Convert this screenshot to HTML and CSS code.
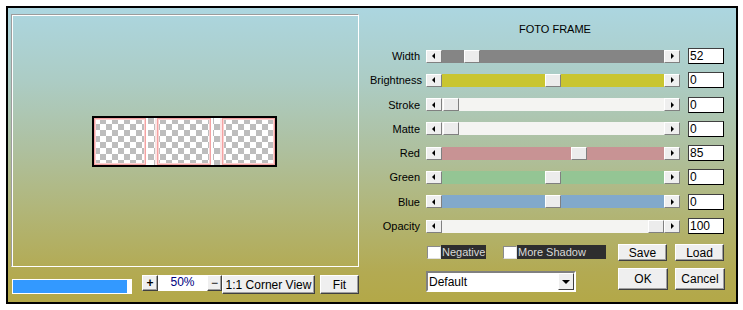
FILE: index.html
```html
<!DOCTYPE html>
<html lang="en">
<head>
    <meta charset="UTF-8">
    <title>Foto Frame</title>
    <link rel="stylesheet" href="styles.css">
</head>
<body>
    <div class="dialog">
        <div class="left-pane">
            <div class="preview">
                <div class="photo">
                    <div class="frame" style="width: 52px"></div>
                    <div class="strip"></div>
                    <div class="frame" style="width: 54px"></div>
                    <div class="strip"></div>
                    <div class="frame" style="width: 53px"></div>
                </div>
            </div>
            <div class="tools">
                <div class="progress"><div class="progress-fill"></div></div>
                <button class="btn zoom-btn">+</button>
                <div class="zoom-value">50%</div>
                <button class="btn zoom-btn minus">&minus;</button>
                <button class="btn corner-btn">1:1 Corner View</button>
                <button class="btn fit-btn">Fit</button>
            </div>
        </div>
        <div class="right-pane">
            <div class="title">FOTO FRAME</div>
            <div class="rows">
                <span class="label">Width</span>
                <div class="slider"><span class="arrow"><i class="tri-left"></i></span><div class="track tr-gray"><span class="thumb" style="margin-left: 22px"></span></div><span class="arrow"><i class="tri-right"></i></span></div>
                <div class="value">52</div>

                <span class="label">Brightness</span>
                <div class="slider"><span class="arrow"><i class="tri-left"></i></span><div class="track tr-yellow"><span class="thumb" style="margin-left: 103px"></span></div><span class="arrow"><i class="tri-right"></i></span></div>
                <div class="value">0</div>

                <span class="label">Stroke</span>
                <div class="slider"><span class="arrow"><i class="tri-left"></i></span><div class="track tr-white"><span class="thumb" style="margin-left: 1px"></span></div><span class="arrow"><i class="tri-right"></i></span></div>
                <div class="value">0</div>

                <span class="label">Matte</span>
                <div class="slider"><span class="arrow"><i class="tri-left"></i></span><div class="track tr-white"><span class="thumb" style="margin-left: 1px"></span></div><span class="arrow"><i class="tri-right"></i></span></div>
                <div class="value">0</div>

                <span class="label">Red</span>
                <div class="slider"><span class="arrow"><i class="tri-left"></i></span><div class="track tr-red"><span class="thumb" style="margin-left: 129px"></span></div><span class="arrow"><i class="tri-right"></i></span></div>
                <div class="value">85</div>

                <span class="label">Green</span>
                <div class="slider"><span class="arrow"><i class="tri-left"></i></span><div class="track tr-green"><span class="thumb" style="margin-left: 103px"></span></div><span class="arrow"><i class="tri-right"></i></span></div>
                <div class="value">0</div>

                <span class="label">Blue</span>
                <div class="slider"><span class="arrow"><i class="tri-left"></i></span><div class="track tr-blue"><span class="thumb" style="margin-left: 103px"></span></div><span class="arrow"><i class="tri-right"></i></span></div>
                <div class="value">0</div>

                <span class="label">Opacity</span>
                <div class="slider"><span class="arrow"><i class="tri-left"></i></span><div class="track tr-white"><span class="thumb" style="margin-left: 206px"></span></div><span class="arrow"><i class="tri-right"></i></span></div>
                <div class="value">100</div>
            </div>
            <div class="options">
                <span class="check"></span><span class="check-label" style="width: 45px">Negative</span>
                <span class="check second"></span><span class="check-label" style="width: 89px">More Shadow</span>
                <button class="btn save-btn">Save</button>
                <button class="btn load-btn">Load</button>
            </div>
            <div class="actions">
                <div class="select">
                    <span class="select-text">Default</span>
                    <span class="select-arrow"><i class="tri-down"></i></span>
                </div>
                <button class="btn ok-btn">OK</button>
                <button class="btn cancel-btn">Cancel</button>
            </div>
        </div>
    </div>
</body>
</html>
```

FILE: styles.css
```css
body { margin: 0; background: #fff; font-family: "Liberation Sans", Arial, sans-serif; font-size: 11px; color: #000; }
.dialog { margin: 6px; width: 732px; height: 298px; box-sizing: border-box; border: 2px solid #000; display: flex;
    background: linear-gradient(#acd6e0 0%, #acccc4 25%, #aec09f 48%, #b1b67a 68%, #b3aa52 90%, #b3a848 100%); }

/* preview side */
.left-pane { width: 348px; padding: 6px 0 0 3px; }
.preview { box-sizing: border-box; width: 348px; height: 253px; border: 1px solid; border-color: #9c9c9c #fff #fff #9c9c9c;
    box-shadow: inset 1px 1px #fff; display: flex; align-items: center; justify-content: center; }
.photo { display: flex; width: 181px; height: 47px; border: 2px solid #000; margin: 1px 1px 0 0;
    background-image: conic-gradient(#bdbdbd 25%, #fff 0 50%, #bdbdbd 0 75%, #fff 0); background-size: 12px 12px; }
.frame { box-sizing: border-box; height: 47px; border: 1px solid #f4a2a2; box-shadow: inset 0 0 0 1px #fbd2d2; }
.strip { box-sizing: border-box; width: 11px; height: 47px; border-left: 2px solid #fff; border-right: 2px solid #fbe6e6; }

.tools { display: flex; align-items: flex-start; margin-top: 8px; }
.progress { box-sizing: border-box; width: 120px; height: 15px; margin: 4px 10px 0 1px; background: #fff; padding: 1px 5px 1px 1px; }
.progress-fill { height: 13px; background: #3399ff; }

.btn { box-sizing: border-box; margin: 0; padding: 0; font-family: "Liberation Sans", Arial, sans-serif; font-size: 11px; color: #000;
    background: #efefef; border: 1px solid; border-color: #fff #404040 #404040 #fff; box-shadow: inset -1px -1px #a0a0a0; }
.zoom-btn { width: 16px; height: 16px; font-weight: bold; font-size: 12px; line-height: 12px; }
.minus { width: 15px; font-weight: normal; }
.zoom-value { width: 49px; height: 16px; background: #fff; color: #000080; font-size: 12px; line-height: 14px; text-align: center; }
.corner-btn { width: 93px; height: 19px; font-size: 12px; }
.fit-btn { width: 39px; height: 19px; margin-left: 5px; font-size: 12px; }

/* controls side */
.right-pane { margin-left: 11px; padding-top: 15px; }
.title { margin-left: 16px; width: 338px; text-align: center; line-height: 13px; margin-bottom: 12px; }
.rows { display: grid; grid-template-columns: 56px 262px 36px; grid-auto-rows: 16px; row-gap: 8.3px; align-items: center; }
.label { text-align: right; padding-right: 6px; white-space: nowrap; }
.slider { display: flex; width: 254px; height: 13px; }
.arrow { box-sizing: border-box; width: 16px; height: 13px; background: #efefef; display: flex; align-items: center; justify-content: center;
    border: 1px solid; border-color: #fff #808080 #808080 #fff; }
.tri-left { width: 0; height: 0; border-right: 3px solid #000; border-top: 3px solid transparent; border-bottom: 3px solid transparent; margin-right: 2px; }
.tri-right { width: 0; height: 0; border-left: 3px solid #000; border-top: 3px solid transparent; border-bottom: 3px solid transparent; margin-left: 1px; }
.track { flex: 1; display: flex; }
.tr-gray { background: #858585; }
.tr-yellow { background: #c9c530; }
.tr-white { background: #f4f4f2; }
.tr-red { background: #c89394; }
.tr-green { background: #94c594; }
.tr-blue { background: #82a9cb; }
.thumb { box-sizing: border-box; width: 16px; height: 13px; background: #ececec; border: 1px solid; border-color: #fff #808080 #808080 #fff; }
.value { box-sizing: border-box; width: 36px; height: 16px; background: #fff; border: 1px solid #000; border-color: #404040 #000 #000 #404040;
    font-size: 12px; line-height: 14px; padding-left: 1px; }

.options { display: flex; align-items: flex-start; margin: 10px 0 0 56px; height: 17px; }
.check { box-sizing: border-box; width: 14px; height: 13px; margin: 2px 0 0 1px; background: #fff; border: 1px solid; border-color: #8a8a8a #e0e0e0 #e0e0e0 #8a8a8a; }
.check.second { margin-left: 17px; }
.check-label { height: 14px; margin-top: 1px; background: #2e2e2e; color: #d9d9d9; line-height: 14px; padding-left: 1px; box-sizing: border-box; white-space: nowrap; }
.save-btn { width: 49px; height: 17px; margin-left: 12px; font-size: 12px; }
.load-btn { width: 49px; height: 17px; margin-left: 8px; font-size: 12px; }

.actions { display: flex; align-items: flex-start; margin: 7px 0 0 56px; }
.select { box-sizing: border-box; width: 150px; height: 21px; margin-top: 3px; background: #fff; display: flex; align-items: center;
    border: 2px solid; border-color: #808080 #fff #fff #808080; }
.select-text { flex: 1; padding-left: 1px; font-size: 12px; }
.select-arrow { box-sizing: border-box; width: 16px; height: 17px; background: #efefef; display: flex; align-items: center; justify-content: center;
    border: 1px solid; border-color: #fff #404040 #404040 #fff; }
.tri-down { width: 0; height: 0; border-top: 4px solid #000; border-left: 4px solid transparent; border-right: 4px solid transparent; }
.ok-btn { width: 50px; height: 22px; margin-left: 42px; font-size: 12px; }
.cancel-btn { width: 50px; height: 22px; margin-left: 7px; font-size: 12px; }
```
